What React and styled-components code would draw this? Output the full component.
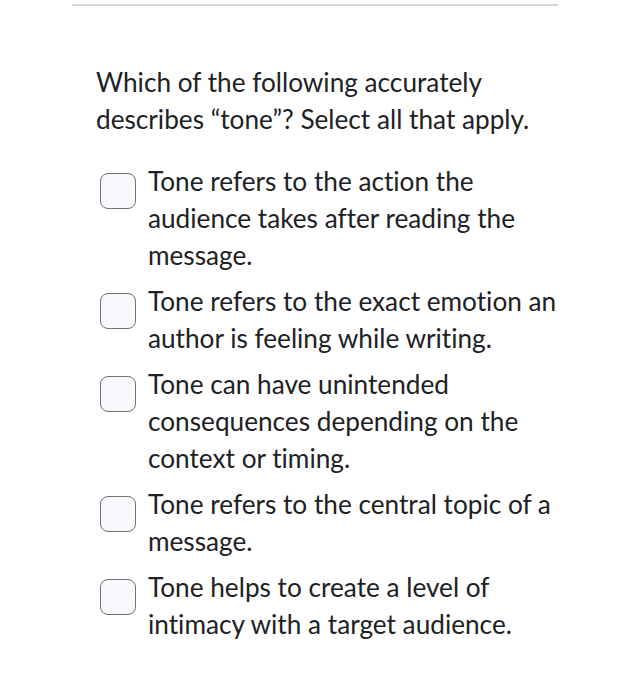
import React from 'react';
import styled, { createGlobalStyle } from 'styled-components';

const GlobalStyle = createGlobalStyle`
  body {
    margin: 0;
    background: #ffffff;
    font-family: Lato, "Noto Sans", sans-serif;
    font-variant-ligatures: none;
    color: #202124;
  }
`;

const Page = styled.div`
  width: 630px;
  height: 700px;
  padding: 4px 72px 0;
  box-sizing: border-box;
`;

const Divider = styled.div`
  height: 2px;
  background: #d6d6d6;
`;

const Question = styled.div`
  padding: 0 0 0 24px;
  width: 476px;
  margin-top: 58px;
`;

const Prompt = styled.p`
  margin: 0 0 25px;
  font-size: 26.2px;
  line-height: 37px;
`;

const Options = styled.div`
  display: flex;
  flex-direction: column;
  gap: 9px;
`;

const Option = styled.label`
  display: flex;
  align-items: flex-start;
  gap: 12px;
  font-size: 26.2px;
  line-height: 37px;
`;

const Box = styled.span`
  flex: none;
  width: 34px;
  height: 34px;
  margin: 10px 0 0 4px;
  border: 1.5px solid #6f7276;
  border-radius: 8px;
  background: #f6f8fb;
`;

const options = [
  'Tone refers to the action the audience takes after reading the message.',
  'Tone refers to the exact emotion an author is feeling while writing.',
  'Tone can have unintended consequences depending on the context or timing.',
  'Tone refers to the central topic of a message.',
  'Tone helps to create a level of intimacy with a target audience.',
];

const App = () => (
  <Page>
    <GlobalStyle />
    <Divider />
    <Question>
      <Prompt>Which of the following accurately describes “tone”? Select all that apply.</Prompt>
      <Options>
        {options.map((text) => (
          <Option key={text}>
            <Box />
            <span>{text}</span>
          </Option>
        ))}
      </Options>
    </Question>
  </Page>
);

export default App;
